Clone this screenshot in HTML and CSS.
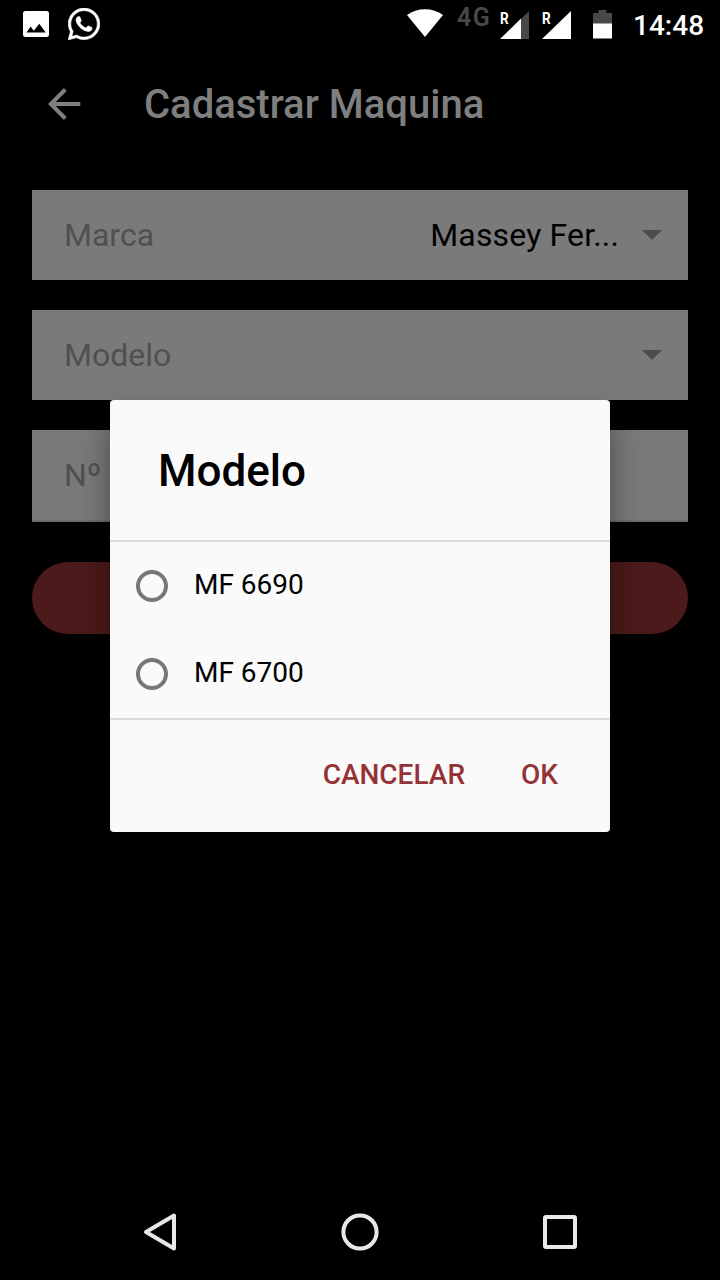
FILE: index.html
```html
<!DOCTYPE html>
<html lang="pt-BR">
<head>
<meta charset="utf-8">
<title>Cadastrar Maquina</title>
<link rel="stylesheet" href="styles.css">
</head>
<body>
<div class="screen">
  <div class="status-bar">
    <svg class="icon-image" width="26" height="26" viewBox="0 0 26 26"><path fill="#fff" fill-rule="evenodd" d="M2.5 0h21A2.5 2.5 0 0 1 26 2.500v21a2.500 2.500 0 0 1-2.500 2.500h-21A2.500 2.500 0 0 1 0 23.500v-21A2.500 2.500 0 0 1 2.500 0ZM3.500 21.500h19.200L16.300 12.800l-5.500 7-3.200-4.200Z"/></svg>
    <svg class="icon-whatsapp" width="32" height="32" viewBox="2 2 20 20"><path fill="#fff" d="M12.04 2C6.58 2 2.13 6.45 2.13 11.91C2.13 13.66 2.59 15.36 3.45 16.86L2.05 22L7.3 20.62C8.75 21.41 10.38 21.83 12.04 21.83C17.5 21.83 21.95 17.38 21.95 11.92C21.95 9.27 20.92 6.78 19.05 4.91C17.18 3.03 14.69 2 12.04 2M12.05 3.67C14.25 3.67 16.31 4.53 17.87 6.09C19.42 7.65 20.28 9.72 20.28 11.92C20.28 16.46 16.58 20.15 12.04 20.15C10.56 20.15 9.11 19.76 7.85 19L7.55 18.83L4.43 19.65L5.26 16.61L5.06 16.29C4.24 15 3.8 13.47 3.8 11.91C3.81 7.37 7.5 3.67 12.05 3.67M8.53 7.33C8.37 7.33 8.1 7.39 7.87 7.64C7.65 7.89 7 8.5 7 9.71C7 10.93 7.89 12.1 8 12.27C8.14 12.44 9.76 14.94 12.25 16C12.84 16.27 13.3 16.42 13.66 16.53C14.25 16.72 14.79 16.69 15.22 16.63C15.7 16.56 16.68 16.03 16.89 15.45C17.1 14.87 17.1 14.38 17.04 14.27C16.97 14.17 16.81 14.11 16.56 14C16.31 13.86 15.09 13.26 14.87 13.18C14.64 13.1 14.5 13.06 14.31 13.3C14.15 13.55 13.67 14.11 13.53 14.27C13.38 14.44 13.24 14.46 13 14.34C12.74 14.21 11.94 13.95 11 13.11C10.26 12.45 9.77 11.64 9.62 11.39C9.5 11.15 9.61 11 9.73 10.89C9.84 10.78 10 10.6 10.1 10.45C10.23 10.31 10.27 10.2 10.35 10.04C10.43 9.87 10.39 9.73 10.33 9.61C10.27 9.5 9.77 8.26 9.56 7.77C9.36 7.29 9.16 7.35 9 7.34C8.86 7.34 8.7 7.33 8.53 7.33Z" stroke="#fff" stroke-width=".3"/></svg>
    <svg class="icon-wifi" width="36" height="28" viewBox="0 0 36 28"><path fill="#fff" d="M0 6Q8 .3 18 .3T36 6L18 28Z"/></svg>
    <span class="network">4G</span>
    <div class="signal">
      <svg width="29" height="28" viewBox="0 0 29 28"><path fill="#484848" d="M21 8 29 0v28h-8Z"/><path fill="#fff" d="M0 28 21 7.500V28Z"/></svg>
      <span class="roaming">R</span>
    </div>
    <div class="signal">
      <svg width="29" height="28" viewBox="0 0 29 28"><path fill="#fff" d="M0 28 29 0v28Z"/></svg>
      <span class="roaming">R</span>
    </div>
    <svg class="icon-battery" width="19" height="29" viewBox="0 0 19 29"><path fill="#484848" d="M0 3h5.500V0h8v3H19v11H0Z"/><path fill="#fff" d="M0 13.500h19v15H0Z"/></svg>
    <span class="clock">14:48</span>
  </div>

  <header class="toolbar">
    <svg class="back" width="33" height="32" viewBox="0 0 33 32"><path fill="none" stroke="#7f7f7f" stroke-width="4" d="M32.300 16H3.500M17.300 1.500 2.800 16l14.500 14.500"/></svg>
    <h1 class="title">Cadastrar Maquina</h1>
  </header>

  <main class="form">
    <div class="field">
      <span class="label">Marca</span>
      <span class="value">Massey Fer...</span>
      <span class="caret"></span>
    </div>
    <div class="field">
      <span class="label">Modelo</span>
      <span class="caret"></span>
    </div>
    <div class="field field-input"><span class="label">Nº</span></div>
    <div class="submit"></div>
  </main>

  <nav class="nav-bar">
    <svg width="40" height="40" viewBox="0 0 40 40"><path d="M34 3.500v33L6 20Z"/></svg>
    <svg width="40" height="40" viewBox="0 0 40 40"><circle cx="20" cy="20" r="16.600"/></svg>
    <svg width="40" height="40" viewBox="0 0 40 40"><rect x="5" y="5" width="30" height="30" rx="1"/></svg>
  </nav>

  <div class="dialog" role="dialog">
    <h2 class="dialog-title">Modelo</h2>
    <div class="options">
      <div class="option"><span class="radio"></span><span class="option-text">MF 6690</span></div>
      <div class="option"><span class="radio"></span><span class="option-text">MF 6700</span></div>
    </div>
    <div class="actions">
      <span class="action">CANCELAR</span>
      <span class="action">OK</span>
    </div>
  </div>
</div>
</body>
</html>
```
FILE: styles.css
```css
* { box-sizing: border-box; }
body {
  margin: 0;
  background: #000;
  font-family: Roboto, "Liberation Sans", sans-serif;
}
svg { display: block; flex: none; }
.screen {
  position: relative;
  display: flex;
  flex-direction: column;
  width: 720px;
  height: 1280px;
  overflow: hidden;
  background: #000;
}

.status-bar {
  display: flex;
  align-items: center;
  height: 48px;
  padding: 0 16px 0 23px;
  white-space: nowrap;
}
.icon-whatsapp { margin-left: 19px; }
.icon-wifi { margin: 0 14px 2px auto; }
.network {
  width: 35px;
  margin: 0 8px 12px 0;
  font-size: 25px;
  font-weight: 600;
  line-height: 28px;
  letter-spacing: 1.5px;
  color: #484848;
}
.signal {
  position: relative;
  margin: 2px 13px 0 0;
}
.roaming {
  position: absolute;
  left: 0;
  top: -1px;
  font-size: 17px;
  font-weight: 700;
  line-height: 17px;
  color: #fff;
  transform: scaleX(.8);
  transform-origin: left;
}
.icon-battery { margin: 0 21px 0 9px; }
.clock {
  width: 71px;
  padding-top: 4px;
  font-size: 28px;
  font-weight: 500;
  line-height: 32px;
  color: #fff;
}

.toolbar {
  display: flex;
  align-items: center;
  gap: 63px;
  height: 112px;
  padding-left: 48px;
}
.title {
  margin: 0;
  padding-top: 2px;
  font-size: 40px;
  font-weight: 500;
  line-height: 48px;
  color: #7f7f7f;
}

.form {
  display: flex;
  flex-direction: column;
  gap: 30px;
  padding: 30px 32px 0;
}
.field {
  display: flex;
  align-items: center;
  height: 90px;
  padding: 0 26px 0 32px;
  background: #7a7a7a;
  font-size: 32px;
}
.field-input {
  height: 92px;
  border-bottom: 2px solid #6c6e6d;
}
.label { flex: 1; color: #505050; }
.value {
  color: #000;
  letter-spacing: .15px;
}
.caret {
  margin-left: 23px;
  border: 10px solid transparent;
  border-top-color: #4b4b4b;
  border-bottom: 0;
}
.submit {
  height: 72px;
  margin-top: 10px;
  border-radius: 36px;
  background: #4c1a1a;
}

.nav-bar {
  display: flex;
  justify-content: space-between;
  align-items: center;
  height: 96px;
  margin-top: auto;
  padding: 0 140px;
}
.nav-bar svg {
  fill: none;
  stroke: #e8e8e8;
  stroke-width: 4;
  stroke-linejoin: round;
}

.dialog {
  position: absolute;
  left: 110px;
  top: 400px;
  display: flex;
  flex-direction: column;
  width: 500px;
  height: 432px;
  border-radius: 4px;
  background: #fafafa;
  box-shadow: 0 18px 32px rgba(0, 0, 0, .4);
}
.dialog-title {
  height: 140px;
  margin: 0;
  padding: 0 48px;
  font-size: 44px;
  font-weight: 500;
  line-height: 142px;
  color: #000;
}
.options {
  border-top: 2px solid #dadada;
  border-bottom: 2px solid #dadada;
}
.option {
  display: flex;
  align-items: center;
  gap: 26px;
  height: 88px;
  padding-left: 26px;
}
.radio {
  width: 32px;
  height: 32px;
  border: 4px solid #777;
  border-radius: 50%;
}
.option-text {
  padding-bottom: 2px;
  font-size: 28px;
  line-height: 32px;
  color: #000;
}
.actions {
  display: flex;
  justify-content: flex-end;
  align-items: center;
  gap: 56px;
  flex: 1;
  padding: 0 52px 3px 0;
}
.action {
  font-size: 28px;
  font-weight: 500;
  line-height: 32px;
  color: #943235;
}
```
